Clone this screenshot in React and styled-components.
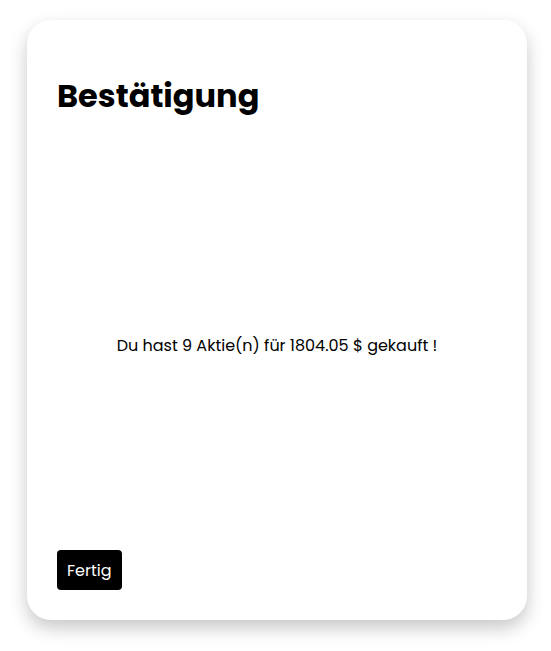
import React from "react";
import styled, { createGlobalStyle } from "styled-components";

const Global = createGlobalStyle`
  html, body { margin: 0; padding: 0; background: #ffffff; }
  body { font-family: "Poppins", "Noto Sans", "Open Sans", sans-serif; }
  * { box-sizing: border-box; }
`;

const Page = styled.div`
  padding: 20px 24px 31px 27px;
  display: flex;
`;

const Card = styled.section`
  width: 500px;
  height: 600px;
  background: #ffffff;
  border-radius: 24px;
  box-shadow: 0 8px 18px rgba(0, 0, 0, 0.22);
  padding: 30px;
  display: flex;
  flex-direction: column;
`;

const Title = styled.h1`
  margin: 26px 0 0;
  font-size: 32px;
  line-height: 40px;
  font-weight: 700;
  color: #000;
`;

const Message = styled.div`
  flex: 1;
  display: flex;
  align-items: center;
  justify-content: center;
  padding-top: 24px;
  font-size: 16px;
  color: #000;
`;

const Button = styled.button`
  align-self: flex-start;
  height: 40px;
  padding: 0 10px;
  border: none;
  border-radius: 4px;
  background: #000;
  color: #fff;
  font-family: inherit;
  font-size: 16px;
`;

export default function App() {
  return (
    <>
      <Global />
      <Page>
        <Card>
          <Title>Bestätigung</Title>
          <Message>Du hast 9 Aktie(n) für 1804.05 $ gekauft !</Message>
          <Button>Fertig</Button>
        </Card>
      </Page>
    </>
  );
}
